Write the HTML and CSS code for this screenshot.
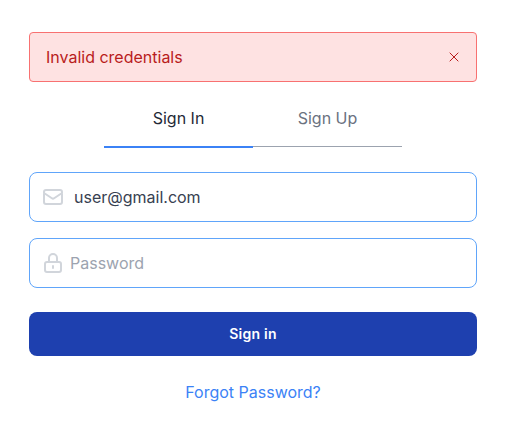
FILE: index.html
```html
<!DOCTYPE html>
<html lang="en">
<head>
<meta charset="utf-8">
<title>Sign In</title>
<link rel="stylesheet" href="styles.css">
</head>
<body>
<main class="auth">
  <div class="alert" role="alert">
    <span>Invalid credentials</span>
    <button class="alert-close" type="button" aria-label="Close">
      <svg width="10" height="10" viewBox="0 0 10 10" fill="none" stroke="currentColor" stroke-width="1"><path d="M.7.7l8.6 8.6M9.3.7L.7 9.3"/></svg>
    </button>
  </div>
  <nav class="tabs">
    <a class="tab tab-active">Sign In</a>
    <a class="tab">Sign Up</a>
  </nav>
  <form class="form">
    <label class="field field-email">
      <svg class="icon" viewBox="0 0 24 24"><path d="M3 8l7.89 5.26a2 2 0 002.22 0L21 8M5 19h14a2 2 0 002-2V7a2 2 0 00-2-2H5a2 2 0 00-2 2v10a2 2 0 002 2z"/></svg>
      <input class="input" type="text" value="user@gmail.com">
    </label>
    <label class="field field-password">
      <svg class="icon" viewBox="0 0 24 24"><path d="M12 15v2m-6 4h12a2 2 0 002-2v-6a2 2 0 00-2-2H6a2 2 0 00-2 2v6a2 2 0 002 2zm10-10V7a4 4 0 00-8 0v4h8z"/></svg>
      <input class="input" type="password" placeholder="Password">
    </label>
    <button class="submit" type="button">Sign in</button>
  </form>
  <a class="forgot">Forgot Password?</a>
</main>
</body>
</html>
```
FILE: styles.css
```css
* {
  box-sizing: border-box;
}

body {
  margin: 0;
  background: #fff;
  font: 16px/24px Inter, "Liberation Sans", sans-serif;
}

.auth {
  display: flex;
  flex-direction: column;
  width: 448px;
  margin: 32px 0 0 29px;
}

.alert {
  display: flex;
  align-items: center;
  justify-content: space-between;
  height: 50px;
  padding: 0 17px 0 16px;
  border: 1px solid #f87171;
  border-radius: 4px;
  background: #fee2e2;
  color: #b91c1c;
}

.alert-close {
  display: flex;
  padding: 0;
  border: 0;
  background: none;
  color: inherit;
}

.tabs {
  display: flex;
  align-items: flex-start;
  width: 298px;
  height: 58px;
  margin: 8px 0 0 75px;
}

.tab {
  width: 149px;
  padding: 16px 0;
  border-bottom: 1px solid #9ca3af;
  text-align: center;
  color: #6b7280;
}

.tab-active {
  border-bottom: 2px solid #3b82f6;
  color: #1f2937;
}

.form {
  display: flex;
  flex-direction: column;
  gap: 16px;
  margin-top: 24px;
}

.field {
  display: flex;
  align-items: center;
  height: 50px;
  padding: 0 11px;
  border: 1px solid #60a5fa;
  border-radius: 8px;
}

.field-email {
  gap: 9px;
}

.field-password {
  gap: 5px;
}

.icon {
  width: 24px;
  height: 24px;
  flex: none;
  fill: none;
  stroke: #d1d5db;
  stroke-width: 2;
  stroke-linecap: round;
  stroke-linejoin: round;
}

.input {
  flex: 1;
  min-width: 0;
  padding: 0;
  border: 0;
  outline: 0;
  background: transparent;
  font: inherit;
  color: #374151;
}

.input::placeholder {
  color: #9ca3af;
  opacity: 1;
}

.submit {
  height: 44px;
  margin-top: 8px;
  padding: 0;
  border: 0;
  border-radius: 8px;
  background: #1e40af;
  color: #fff;
  font: 600 14px/20px Inter, "Liberation Sans", sans-serif;
  letter-spacing: .25px;
}

.forgot {
  margin-top: 24px;
  text-align: center;
  color: #3b82f6;
}
```
